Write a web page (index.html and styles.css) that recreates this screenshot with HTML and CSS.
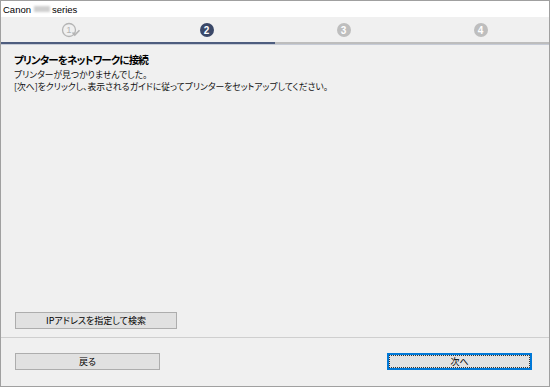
FILE: index.html
```html
<!DOCTYPE html>
<html lang="ja">
<head>
<meta charset="utf-8">
<link rel="stylesheet" href="styles.css">
</head>
<body>
<div class="window">
  <div class="titlebar"><span class="brand">Canon</span><span class="blur"></span><span class="brand">series</span></div>
  <div class="steps">
    <div class="step">
      <svg width="22" height="16" viewBox="0 0 22 16">
        <circle cx="8" cy="8" r="6.5" fill="none" stroke="#b4b4b4" stroke-width="1.3"/>
        <text x="8" y="11.3" text-anchor="middle" font-family="Liberation Sans, sans-serif" font-size="9.5" fill="#b4b4b4">1</text>
        <path d="M11.5 10.5 L13.8 13 L18.5 8.2" fill="none" stroke="#b4b4b4" stroke-width="1.6"/>
      </svg>
    </div>
    <div class="step"><span class="num current">2</span></div>
    <div class="step"><span class="num">3</span></div>
    <div class="step"><span class="num">4</span></div>
  </div>
  <div class="progress"></div>
  <div class="content">
    <h1 class="heading">プリンターをネットワークに接続</h1>
    <p class="msg">プリンターが見つかりませんでした。</p>
    <p class="msg">[次へ]をクリックし、表示されるガイドに従ってプリンターをセットアップしてください。</p>
    <div class="ip-row"><button class="btn ip">IPアドレスを指定して検索</button></div>
  </div>
  <div class="footer">
    <button class="btn back">戻る</button>
    <button class="btn next">次へ</button>
  </div>
</div>
</body>
</html>
```

FILE: styles.css
```css
* { box-sizing: border-box; }
html, body { margin: 0; padding: 0; background: #f0f0f0; }
body { font-family: "Noto Sans CJK JP", "Liberation Sans", sans-serif; color: #000; }

.window {
  width: 550px;
  height: 387px;
  border: 1px solid #a0a0a0;
  background: #f0f0f0;
  display: flex;
  flex-direction: column;
}

.titlebar {
  height: 16px;
  background: #fff;
  display: flex;
  align-items: center;
  padding-left: 2px;
  font-family: "Liberation Sans", sans-serif;
  font-size: 9.5px;
  color: #000;
}
.blur {
  display: inline-block;
  width: 16px;
  height: 6px;
  margin: 0 2px 0 3px;
  background: #cfcfcf;
  filter: blur(0.8px);
}

.steps {
  height: 25px;
  display: grid;
  grid-template-columns: repeat(4, 1fr);
  align-items: center;
  justify-items: center;
  background: #f0f0f0;
}
.step { display: flex; align-items: center; justify-content: center; padding-top: 1px; }
.step svg { margin-left: 5px; display: block; }
.num {
  width: 14px;
  height: 14px;
  border-radius: 50%;
  background: #bebebe;
  color: #fff;
  font-family: "Liberation Sans", sans-serif;
  font-weight: bold;
  font-size: 10px;
  display: flex;
  align-items: center;
  justify-content: center;
}
.num.current { background: #3a4868; }

.progress {
  height: 3px;
  background: linear-gradient(to right, #4e5d7e 0, #4e5d7e 50%, #bdbdbd 50%, #bdbdbd 100%);
  border-bottom: 1px solid #c6cbd6;
}

.content {
  flex: 1;
  display: flex;
  flex-direction: column;
  padding: 8px 0 8px 13px;
}
.heading {
  margin: 0 0 2px;
  font-size: 10.5px;
  font-weight: bold;
  line-height: 14px;
  letter-spacing: -0.85px;
  font-feature-settings: "palt";
}
.msg {
  margin: 0;
  font-size: 8.8px;
  line-height: 12px;
  font-feature-settings: "palt";
  color: #111;
}
.ip-row { margin-top: auto; padding-left: 1px; }

.btn {
  height: 17px;
  border: 1px solid #adadad;
  background: #e1e1e1;
  font-family: "Noto Sans CJK JP", sans-serif;
  font-size: 9px;
  color: #000;
  padding: 0;
  font-feature-settings: "palt";
  display: flex;
  align-items: center;
  justify-content: center;
}
.ip { width: 162px; }

.footer {
  height: 49px;
  border-top: 1px solid #cfcfcf;
  display: flex;
  justify-content: space-between;
  align-items: flex-start;
  padding: 15px 17px 0 14px;
}
.back { width: 145px; }
.next {
  width: 145px;
  border: 2px solid #0078d7;
  outline: 1px dotted #333;
  outline-offset: -3px;
}
```
